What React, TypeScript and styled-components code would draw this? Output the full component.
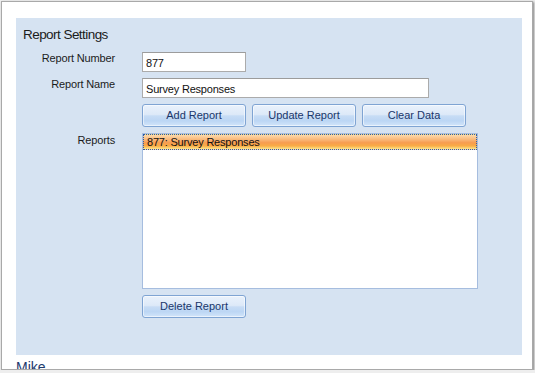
import * as React from 'react';
import styled, { createGlobalStyle } from 'styled-components';

const GlobalStyle = createGlobalStyle`
  html, body {
    margin: 0;
    padding: 0;
    background: #eeeeee;
    font-family: "Liberation Sans", Arial, sans-serif;
  }
`;

const Page = styled.div`
  padding: 1px 0 0 1px;
`;

const Window = styled.div`
  box-sizing: border-box;
  width: 532px;
  height: 369px;
  background: #ffffff;
  border: 1px solid #a9a9a9;
  box-shadow: 1px 1px 2px rgba(0, 0, 0, 0.45);
  overflow: hidden;
  padding: 16px 0 0 14px;
`;

const Panel = styled.div`
  box-sizing: border-box;
  width: 506px;
  height: 337px;
  background: #d6e3f2;
  padding-top: 9px;
`;

const Title = styled.div`
  font-size: 13.5px;
  line-height: 16px;
  letter-spacing: -0.55px;
  color: #1b1b1b;
  padding-left: 7px;
  margin-bottom: 9px;
`;

const Form = styled.div`
  display: grid;
  grid-template-columns: 99px 1fr;
  column-gap: 27px;
  row-gap: 6px;
  align-items: start;
`;

const Label = styled.div<{ $pad?: number }>`
  text-align: right;
  font-size: 11px;
  line-height: 13px;
  letter-spacing: -0.15px;
  color: #1b1b1b;
  padding-top: ${p => p.$pad ?? 0}px;
`;

const Field = styled.div<{ $width: number }>`
  box-sizing: border-box;
  width: ${p => p.$width}px;
  height: 20px;
  background: #ffffff;
  border: 1px solid #ababab;
  border-top-color: #9c9c9c;
  padding: 4px 3px 0 3px;
  font-size: 11px;
  line-height: 13px;
  letter-spacing: -0.2px;
  color: #111111;
`;

const ButtonRow = styled.div`
  display: flex;
  gap: 6px;
`;

const Button = styled.button`
  box-sizing: border-box;
  width: 104px;
  height: 23px;
  margin: 0;
  padding: 0;
  border: 1px solid #7fa4d3;
  border-radius: 3px;
  background: linear-gradient(
    to bottom,
    #eaf2fc 0%,
    #dde9f8 45%,
    #c7dcf5 52%,
    #bcd6f4 75%,
    #d2e5fa 100%
  );
  box-shadow: inset 0 0 0 1px rgba(255, 255, 255, 0.55);
  font-family: "Liberation Sans", Arial, sans-serif;
  font-size: 11px;
  line-height: 13px;
  color: #1a376b;
  cursor: pointer;
`;

const ListBox = styled.div`
  box-sizing: border-box;
  width: 336px;
  height: 156px;
  background: #ffffff;
  border: 1px solid #a6bddf;
`;

const ListItem = styled.div<{ $selected?: boolean }>`
  box-sizing: border-box;
  height: 16px;
  padding: 1px 3px 0 3px;
  font-size: 11px;
  line-height: 13px;
  letter-spacing: -0.2px;
  color: #111111;
  border: 1px dotted ${p => (p.$selected ? '#2f5da6' : 'transparent')};
  background: ${p =>
    p.$selected
      ? 'linear-gradient(to bottom, #fcd9ab 0%, #f9bb7e 30%, #f79c50 55%, #f9ac45 78%, #fde58c 100%)'
      : 'transparent'};
`;

const Footer = styled.div`
  font-size: 14px;
  line-height: 16px;
  color: #1e3a6e;
  padding-top: 4px;
`;

const reports = [{ id: 877, name: 'Survey Responses' }];

export default function App() {
  const [selected] = React.useState(877);

  return (
    <Page>
      <GlobalStyle />
      <Window>
        <Panel>
          <Title>Report Settings</Title>
          <Form>
            <Label>Report Number</Label>
            <Field $width={104}>877</Field>

            <Label>Report Name</Label>
            <Field $width={287}>Survey Responses</Field>

            <span />
            <ButtonRow>
              <Button>Add Report</Button>
              <Button>Update Report</Button>
              <Button>Clear Data</Button>
            </ButtonRow>

            <Label $pad={1}>Reports</Label>
            <ListBox>
              {reports.map(r => (
                <ListItem key={r.id} $selected={r.id === selected}>
                  {r.id}: {r.name}
                </ListItem>
              ))}
            </ListBox>

            <span />
            <ButtonRow>
              <Button>Delete Report</Button>
            </ButtonRow>
          </Form>
        </Panel>
        <Footer>Mike</Footer>
      </Window>
    </Page>
  );
}
